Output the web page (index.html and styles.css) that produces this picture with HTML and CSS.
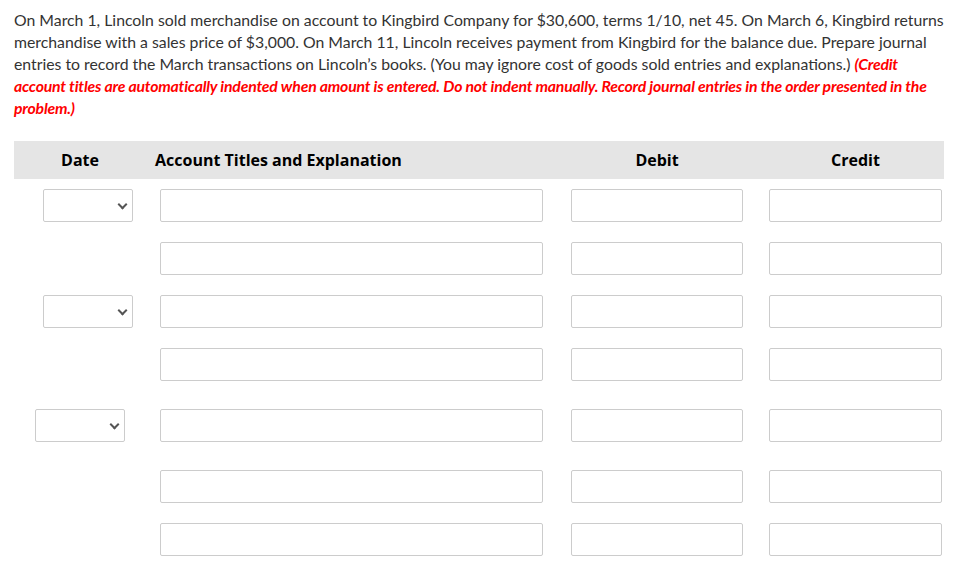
FILE: index.html
```html
<!DOCTYPE html>
<html>
<head>
<meta charset="utf-8">
<link rel="stylesheet" href="styles.css">
</head>
<body>
<div class="page">
  <p class="question">On March 1, Lincoln sold merchandise on account to Kingbird Company for $30,600, terms 1/10, net 45. On March 6, Kingbird returns merchandise with a sales price of $3,000. On March 11, Lincoln receives payment from Kingbird for the balance due. Prepare journal entries to record the March transactions on Lincoln’s books. (You may ignore cost of goods sold entries and explanations.) <em class="note">(Credit account titles are automatically indented when amount is entered. Do not indent manually. Record journal entries in the order presented in the problem.)</em></p>

  <div class="journal">
    <div class="head">
      <div class="h-date">Date</div>
      <div class="h-acct">Account Titles and Explanation</div>
      <div class="h-debit">Debit</div>
      <div class="h-credit">Credit</div>
    </div>

    <div class="row">
      <div class="c-date"><div class="select"><span class="chev"></span></div></div>
      <div class="c-acct"><div class="field acct"></div></div>
      <div class="c-debit"><div class="field amt"></div></div>
      <div class="c-credit"><div class="field amt"></div></div>
    </div>
    <div class="row">
      <div class="c-date"></div>
      <div class="c-acct"><div class="field acct"></div></div>
      <div class="c-debit"><div class="field amt"></div></div>
      <div class="c-credit"><div class="field amt"></div></div>
    </div>

    <div class="row">
      <div class="c-date"><div class="select"><span class="chev"></span></div></div>
      <div class="c-acct"><div class="field acct"></div></div>
      <div class="c-debit"><div class="field amt"></div></div>
      <div class="c-credit"><div class="field amt"></div></div>
    </div>
    <div class="row row-end">
      <div class="c-date"></div>
      <div class="c-acct"><div class="field acct"></div></div>
      <div class="c-debit"><div class="field amt"></div></div>
      <div class="c-credit"><div class="field amt"></div></div>
    </div>

    <div class="row row-end">
      <div class="c-date"><div class="select shifted"><span class="chev"></span></div></div>
      <div class="c-acct"><div class="field acct"></div></div>
      <div class="c-debit"><div class="field amt"></div></div>
      <div class="c-credit"><div class="field amt"></div></div>
    </div>
    <div class="row">
      <div class="c-date"></div>
      <div class="c-acct"><div class="field acct"></div></div>
      <div class="c-debit"><div class="field amt"></div></div>
      <div class="c-credit"><div class="field amt"></div></div>
    </div>
    <div class="row">
      <div class="c-date"></div>
      <div class="c-acct"><div class="field acct"></div></div>
      <div class="c-debit"><div class="field amt"></div></div>
      <div class="c-credit"><div class="field amt"></div></div>
    </div>
  </div>
</div>
</body>
</html>
```

FILE: styles.css
```css
html, body {
  margin: 0;
  padding: 0;
  background: #fff;
}
.page {
  padding: 9px 10px 0 14px;
  font-family: Lato, "Open Sans", sans-serif;
}
.question {
  margin: 0;
  font-size: 15.8px;
  line-height: 22px;
  color: #333;
}
.note {
  color: #ff0000;
  font-weight: 700;
  font-style: italic;
  letter-spacing: -0.2px;
}
.journal {
  margin-top: 22px;
  width: 930px;
}
.head,
.row {
  display: grid;
  grid-template-columns: 146px 411px 198px 175px;
}
.head {
  background: #e5e5e5;
  height: 38px;
  align-items: center;
  font-family: "Open Sans", Lato, sans-serif;
  font-weight: 700;
  font-size: 16px;
  color: #000;
}
.h-date {
  text-align: center;
  padding-right: 14px;
}
.h-acct {
  margin-left: -5px;
}
.h-debit {
  text-align: center;
  padding-right: 26px;
}
.h-credit {
  text-align: center;
  padding-right: 2px;
}
.head + .row {
  margin-top: 10px;
}
.row {
  margin-bottom: 20px;
  height: 33px;
}
.row-end {
  margin-bottom: 28px;
}
.select {
  box-sizing: border-box;
  margin-left: 29px;
  width: 90px;
  height: 33px;
  border: 1px solid #cccccc;
  border-radius: 2px;
  background: #fff;
  display: flex;
  align-items: center;
  justify-content: flex-end;
  padding-right: 6px;
}
.select.shifted {
  margin-left: 21px;
}
.chev {
  width: 5px;
  height: 5px;
  border-right: 2px solid #555;
  border-bottom: 2px solid #555;
  transform: rotate(45deg);
  margin-top: -3px;
}
.field {
  box-sizing: border-box;
  height: 33px;
  border: 1px solid #cccccc;
  border-radius: 2px;
  background: #fff;
}
.field.acct {
  width: 383px;
}
.field.amt {
  width: 173px;
}
.c-debit .field.amt {
  width: 172px;
}
```
